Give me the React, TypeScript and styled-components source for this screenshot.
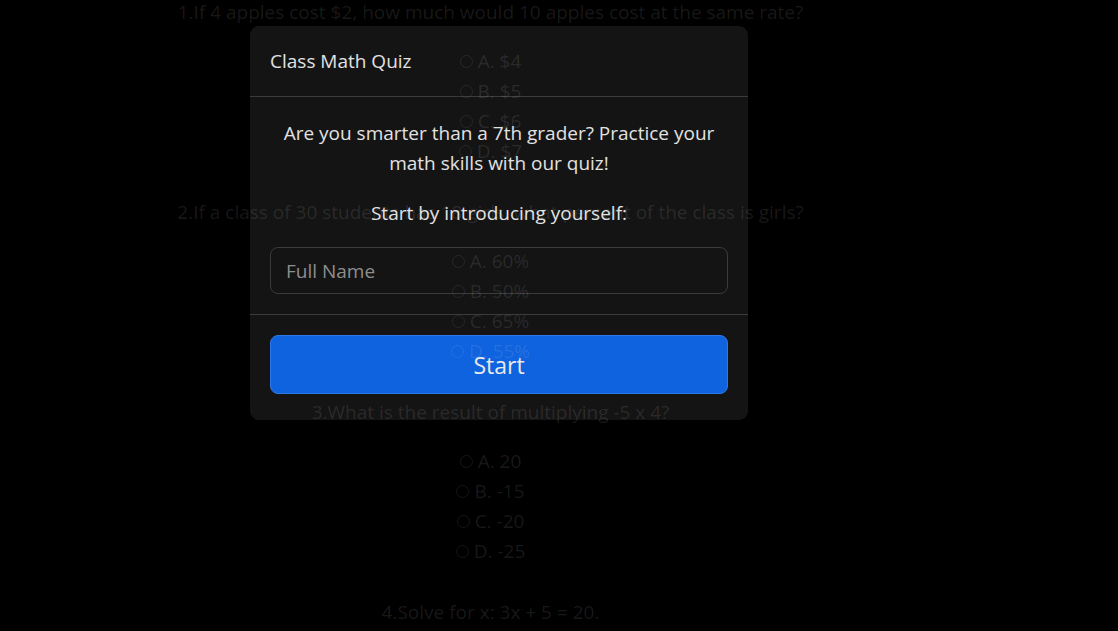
import React from "react";
import styled, { createGlobalStyle } from "styled-components";

const Global = createGlobalStyle`
  html, body { margin: 0; padding: 0; background: #000; }
  body { font-family: "Open Sans", "Noto Sans", sans-serif; overflow: hidden; }
  * { box-sizing: border-box; }
`;

const Page = styled.div`
  position: relative;
  width: 1118px;
  height: 631px;
  background: #000;
  overflow: hidden;
`;

const Quiz = styled.div`
  position: relative;
  z-index: 2;
  width: 981px;
  text-align: center;
  color: rgba(255, 255, 255, 0.1);
  font-size: 19px;
  pointer-events: none;
`;

const Block = styled.div`
  height: 200px;
`;

const Question = styled.div`
  line-height: 24px;
  height: 24px;
  margin-bottom: 22px;
  white-space: nowrap;
`;

const Option = styled.div`
  line-height: 30px;
  height: 30px;
  display: flex;
  justify-content: center;
  align-items: center;
  gap: 5px;
`;

const Radio = styled.span`
  width: 13px;
  height: 13px;
  border-radius: 50%;
  border: 1px solid rgba(255, 255, 255, 0.08);
  display: inline-block;
`;

const Modal = styled.div`
  position: absolute;
  z-index: 1;
  left: 250px;
  top: 26px;
  width: 498px;
  height: 394px;
  background: #141414;
  border-radius: 9px;
  display: flex;
  flex-direction: column;
  color: #e2e2e2;
`;

const Header = styled.div`
  height: 71px;
  padding: 0 20px;
  display: flex;
  align-items: center;
  border-bottom: 1px solid #3b3b3b;
  font-size: 19px;
`;

const Body = styled.div`
  padding: 21px 20px 20px;
  border-bottom: 1px solid #3b3b3b;
  text-align: center;
  font-size: 19px;
`;

const Lead = styled.p`
  margin: 0 0 20px;
  line-height: 30px;
`;

const Prompt = styled.p`
  margin: 0 0 19px;
  line-height: 30px;
`;

const Input = styled.input`
  display: block;
  width: 458px;
  height: 47px;
  background: transparent;
  border: 1px solid #3b3b3b;
  border-radius: 8px;
  padding: 0 15px;
  font-family: inherit;
  font-size: 19px;
  color: #e2e2e2;
  outline: none;
  &::placeholder { color: #8e8e8e; }
`;

const Footer = styled.div`
  padding: 20px 20px 0;
`;

const StartButton = styled.button`
  width: 458px;
  height: 59px;
  background: #0f63de;
  border: 1px solid #2f78e6;
  border-radius: 8px;
  color: #e8e8e8;
  font-family: inherit;
  font-size: 23px;
  cursor: pointer;
`;

const questions = [
  { q: "1.If 4 apples cost $2, how much would 10 apples cost at the same rate?", o: ["A. $4", "B. $5", "C. $6", "D. $7"] },
  { q: "2.If a class of 30 students has 18 girls, what percent of the class is girls?", o: ["A. 60%", "B. 50%", "C. 65%", "D. 55%"] },
  { q: "3.What is the result of multiplying -5 x 4?", o: ["A. 20", "B. -15", "C. -20", "D. -25"] },
  { q: "4.Solve for x: 3x + 5 = 20.", o: ["A. 3", "B. 4", "C. 5", "D. 6"] },
];

export default function App() {
  return (
    <Page>
      <Global />
      <Quiz>
        {questions.map((item) => (
          <Block key={item.q}>
            <Question>{item.q}</Question>
            {item.o.map((opt) => (
              <Option key={opt}>
                <Radio />
                <span>{opt}</span>
              </Option>
            ))}
          </Block>
        ))}
      </Quiz>
      <Modal>
        <Header>Class Math Quiz</Header>
        <Body>
          <Lead>
            Are you smarter than a 7th grader? Practice your
            <br />
            math skills with our quiz!
          </Lead>
          <Prompt>Start by introducing yourself:</Prompt>
          <Input placeholder="Full Name" />
        </Body>
        <Footer>
          <StartButton>Start</StartButton>
        </Footer>
      </Modal>
    </Page>
  );
}
